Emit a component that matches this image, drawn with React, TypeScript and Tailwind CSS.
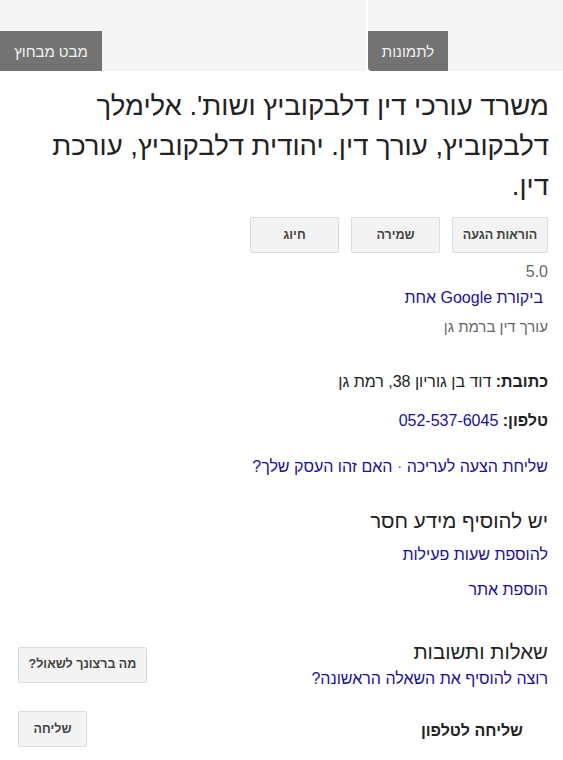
export default function App() {
  return (
    <div
      dir="rtl"
      className="w-[563px] h-[760px] overflow-hidden bg-white text-[#222] font-['Liberation_Sans',Arial,sans-serif]"
    >
      <Photos />
      <div className="pr-[14px] pl-[14px]">
        <h1 className="mt-[15px] text-[27.5px] leading-[40px] font-normal text-[#222]">
          משרד עורכי דין דלבקוביץ ושות'. אלימלך דלבקוביץ, עורך דין. יהודית דלבקוביץ, עורכת דין.
        </h1>
        <Actions />
        <div className="mt-[9px] text-[16px] leading-[20px] text-[#666] pr-[1px]">5.0</div>
        <a href="#" className="mt-[6px] block text-[16px] leading-[20px] text-[#1a0dab] pr-[6px]">
          ביקורת Google אחת
        </a>
        <div className="mt-[9px] text-[15px] leading-[20px] text-[#666] pr-[1px]">עורך דין ברמת גן</div>
        <div className="mt-[35px] text-[16px] leading-[20px] text-[#222] pr-[1px]">
          <span className="font-bold">כתובת: </span>
          דוד בן גוריון 38, רמת גן
        </div>
        <div className="mt-[19px] text-[16px] leading-[20px] pr-[1px]">
          <span className="font-bold">טלפון: </span>
          <a href="#" className="text-[#1a0dab]">052-537-6045</a>
        </div>
        <div className="mt-[26px] text-[16px] leading-[20px] text-[#1a0dab] pr-[1px]">
          <a href="#">שליחת הצעה לעריכה</a>
          <span className="text-[#777]"> · </span>
          <a href="#">האם זהו העסק שלך?</a>
        </div>
        <h2 className="mt-[32px] text-[20.5px] leading-[24px] font-normal text-[#222] pr-[1px]">יש להוסיף מידע חסר</h2>
        <a href="#" className="mt-[12px] block text-[16px] leading-[20px] text-[#1a0dab] pr-[1px]">להוספת שעות פעילות</a>
        <a href="#" className="mt-[15px] block text-[16px] leading-[20px] text-[#1a0dab] pr-[1px]">הוספת אתר</a>
        <div className="mt-[40px] flex items-center justify-between pr-[1px] pl-[4px]">
          <div>
            <h2 className="text-[20.5px] leading-[24px] font-normal text-[#222]">שאלות ותשובות</h2>
            <a href="#" className="mt-[5px] block text-[16px] leading-[20px] text-[#1a0dab]">רוצה להוסיף את השאלה הראשונה?</a>
          </div>
          <Btn className="w-[129px]">מה ברצונך לשאול?</Btn>
        </div>
        <div className="mt-[22px] flex items-center justify-between pr-[26px] pl-[4px]">
          <div className="text-[16px] leading-[20px] font-bold text-[#222] mt-[3px]">שליחה לטלפון</div>
          <Btn className="w-[69px]">שליחה</Btn>
        </div>
      </div>
    </div>
  );
}

function Photos() {
  return (
    <div className="flex h-[71px] gap-[2px]">
      <div className="relative w-[195px] bg-[#f5f5f5] rounded-bl-[4px] overflow-hidden">
        <div className="absolute left-0 bottom-0 h-[40px] w-[80px] bg-[#737373] flex items-center justify-center text-[15px] text-[#f1f1f1] font-['Noto_Sans',sans-serif]">
          לתמונות
        </div>
      </div>
      <div className="relative flex-1 bg-[#f5f5f5] rounded-br-[4px] overflow-hidden">
        <div className="absolute left-0 bottom-0 h-[40px] w-[102px] bg-[#737373] flex items-center justify-center text-[15px] text-[#f1f1f1] font-['Noto_Sans',sans-serif]">
          מבט מבחוץ
        </div>
      </div>
    </div>
  );
}

function Actions() {
  return (
    <div className="mt-[11px] flex gap-[12px] pr-[1px]">
      <Btn className="w-[96px]">הוראות הגעה</Btn>
      <Btn className="w-[89px]">שמירה</Btn>
      <Btn className="w-[89px]">חיוג</Btn>
    </div>
  );
}

function Btn({ children, className = "" }: { children: React.ReactNode; className?: string }) {
  return (
    <button
      className={
        "h-[36px] shrink-0 rounded-[2px] border border-[#dcdcdc] bg-[#f3f3f3] text-[12.5px] font-bold text-[#444] " +
        className
      }
    >
      {children}
    </button>
  );
}
